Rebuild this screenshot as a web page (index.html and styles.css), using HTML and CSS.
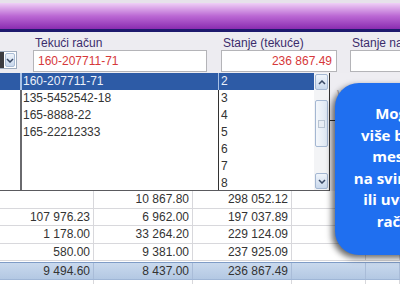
FILE: index.html
```html
<!DOCTYPE html>
<html lang="sr">
  <head>
    <meta charset="UTF-8" />
    <title>Tekući račun</title>
    <link rel="stylesheet" href="styles.css">
  </head>
  <body>
    <div class="topbar"></div>

    <div class="fields">
      <div class="combo">
        <span class="combo-val"></span>
        <span class="combo-btn">
          <svg width="8" height="5" viewBox="0 0 8 5"><path d="M1 1 L4 4 L7 1" fill="none" stroke="#3a4a66" stroke-width="1.5"/></svg>
        </span>
      </div>
      <div class="field f-racun">
        <label>Tekući račun</label>
        <div class="box">160-207711-71</div>
      </div>
      <div class="field f-stanje">
        <label>Stanje (tekuće)</label>
        <div class="box num">236 867.49</div>
      </div>
      <div class="field f-na">
        <label>Stanje na dan</label>
        <div class="box"></div>
      </div>
    </div>

    <!-- otvorena lista računa -->
    <div class="drop">
      <div class="opts">
        <div class="opt sel"><span></span><span>160-207711-71</span><span>2</span></div>
        <div class="opt"><span></span><span>135-5452542-18</span><span>3</span></div>
        <div class="opt"><span></span><span>165-8888-22</span><span>4</span></div>
        <div class="opt"><span></span><span>165-22212333</span><span>5</span></div>
        <div class="opt"><span></span><span></span><span>6</span></div>
        <div class="opt"><span></span><span></span><span>7</span></div>
        <div class="opt"><span></span><span></span><span>8</span></div>
      </div>
      <div class="scroll">
        <div class="sb-btn">
          <svg width="8" height="5" viewBox="0 0 8 5"><path d="M1 4 L4 1 L7 4" fill="none" stroke="#3a4a66" stroke-width="1.5"/></svg>
        </div>
        <div class="sb-thumb"><span class="grip"></span></div>
        <div class="sb-fill"></div>
        <div class="sb-btn">
          <svg width="8" height="5" viewBox="0 0 8 5"><path d="M1 1 L4 4 L7 1" fill="none" stroke="#3a4a66" stroke-width="1.5"/></svg>
        </div>
      </div>
      <div class="behind">
        <div class="behind-head">valute</div>
      </div>
    </div>

    <div class="grid">
      <div class="row"><span></span><span>10 867.80</span><span>298 052.12</span><span></span><span></span></div>
      <div class="row odd"><span>107 976.23</span><span>6 962.00</span><span>197 037.89</span><span></span><span></span></div>
      <div class="row"><span>1 178.00</span><span>33 264.20</span><span>229 124.09</span><span></span><span></span></div>
      <div class="row odd"><span>580.00</span><span>9 381.00</span><span>237 925.09</span><span></span><span></span></div>
      <div class="row total"><span>9 494.60</span><span>8 437.00</span><span>236 867.49</span><span></span><span></span></div>
      <div class="row"><span></span><span></span><span></span><span></span><span></span></div>
    </div>

    <div class="bubble">
      Moguće je<br>
      više bankama<br>
      mesta, gde<br>
      na svim poljima<br>
      ili uvesti novi<br>
      računa za
    </div>
  </body>
</html>
```

FILE: styles.css
```css
body {
  margin: 0;
  width: 400px;
  height: 284px;
  overflow: hidden;
  position: relative;
  background-color: #edecf1;
  font: 12px "Liberation Sans", Arial, sans-serif;
}
.topbar {
  height: 26px;
  border-top: 3px solid #e6e2ea;
  border-bottom: 3px solid #1e1a6e;
  background: linear-gradient(#efd0f6, #bb68d4 50%, #8a2cb0);
}

/* polja */
.fields {
  display: flex;
  height: 41px;
}
.combo {
  margin-top: 19px;
  width: 17px;
  height: 18px;
  display: flex;
  box-sizing: border-box;
  border: 1px solid #9eabbd;
  border-left: 0;
  background: #fff;
}
.combo-val {
  width: 4px;
  background-color: #3c3c40;
}
.combo-btn {
  flex: 1;
  margin: 1px;
  border: 1px solid #a9bcd6;
  border-radius: 2px;
  background: linear-gradient(#eef3fa, #c8d7ec);
  display: flex;
  align-items: center;
  justify-content: center;
}
.field {
  margin-top: 4px;
}
.field label {
  display: block;
  padding-left: 2px;
  line-height: 14px;
  color: #3b2c6c;
  white-space: nowrap;
}
.box {
  height: 20px;
  line-height: 20px;
  padding: 0 4px;
  border: 1px solid #b4b4b8;
  background-color: #fff;
  color: #d6383a;
}
.box.num {
  text-align: right;
}
.f-racun {
  margin-left: 16px;
  width: 174px;
}
.f-racun .box {
  width: 164px;
}
.f-stanje {
  margin-left: 14px;
  width: 116px;
}
.f-stanje .box {
  width: 106px;
}
.f-na {
  margin-left: 13px;
  width: 90px;
  flex-shrink: 0;
}
.f-na .box {
  width: 80px;
}

/* lista */
.drop {
  display: flex;
  height: 118px;
}
.opts {
  width: 314px;
  height: 117px;
  overflow: hidden;
  border-bottom: 1px solid #5a5a5e;
  background-color: #fff;
}
.opt {
  display: flex;
  height: 17px;
  line-height: 17px;
  color: #333;
}
.opt span:nth-child(1) {
  width: 20px;
}
.opt span:nth-child(2) {
  width: 195px;
  padding-left: 1px;
  border-left: 2px solid #6a6a6e;
}
.opt span:nth-child(3) {
  flex: 1;
  padding-left: 2px;
  border-left: 1px solid #333;
}
.opt.sel {
  background-color: #2d5ba6;
  color: #eaf0fa;
}
.opt.sel span {
  border-color: #a9c1e6;
}
.scroll {
  width: 15px;
  height: 117px;
  border-right: 1px solid #333;
  border-bottom: 1px solid #5a5a5e;
  background-color: #f3f4f6;
  display: flex;
  flex-direction: column;
}
.sb-btn {
  height: 14px;
  margin: 1px;
  border: 1px solid #a4b7d2;
  border-radius: 2px;
  background: linear-gradient(#f0f5fb, #c9d8ec);
  display: flex;
  align-items: center;
  justify-content: center;
}
.sb-thumb {
  height: 45px;
  margin: 9px 1px 0;
  border: 1px solid #a4b7d2;
  border-radius: 2px;
  background: linear-gradient(90deg, #f4f7fb, #dde7f3);
  display: flex;
  align-items: center;
  justify-content: center;
}
.grip {
  width: 5px;
  height: 6px;
  border: 1px solid #b9c4d2;
  background-color: #e8edf4;
}
.sb-fill {
  flex: 1;
}
.behind {
  flex: 1;
  background-color: #eeedf2;
}
.behind-head {
  height: 48px;
  padding: 13px 0 0 7px;
  box-sizing: border-box;
  border-bottom: 1px solid #333;
  color: #a3a3ad;
}

/* tabela */
.grid {
  background-color: #fff;
}
.row {
  display: flex;
  height: 18px;
  box-sizing: border-box;
  border-bottom: 1px solid #d8d8dc;
  line-height: 17px;
  color: #333;
}
.row.odd {
  height: 17px;
  line-height: 16px;
}
.row span {
  box-sizing: border-box;
  padding-right: 3px;
  text-align: right;
  border-right: 1px solid #d8d8dc;
}
.row span:nth-child(1) { width: 94px; }
.row span:nth-child(2) { width: 99px; }
.row span:nth-child(3) { width: 99px; }
.row span:nth-child(4) { width: 74px; }
.row span:nth-child(5) { flex: 1; }
.row.total {
  margin-top: 1px;
  border-top: 1px solid #7f9cc6;
  border-bottom-color: #9fb6d6;
  background: linear-gradient(#c9d9ed, #b3c8e3);
}
.row.total span {
  border-right-color: #a9bcd8;
}

/* oblačić */
.bubble {
  position: absolute;
  left: 335px;
  top: 83px;
  width: 156px;
  height: 172px;
  box-sizing: border-box;
  padding-top: 20px;
  border-radius: 24px;
  background-color: #1f6ff0;
  box-shadow: -3px 3px 6px rgba(0, 0, 0, 0.6);
  color: #fff;
  font: bold 15px/21.5px "Open Sans", sans-serif;
  text-align: center;
  white-space: nowrap;
}
```
